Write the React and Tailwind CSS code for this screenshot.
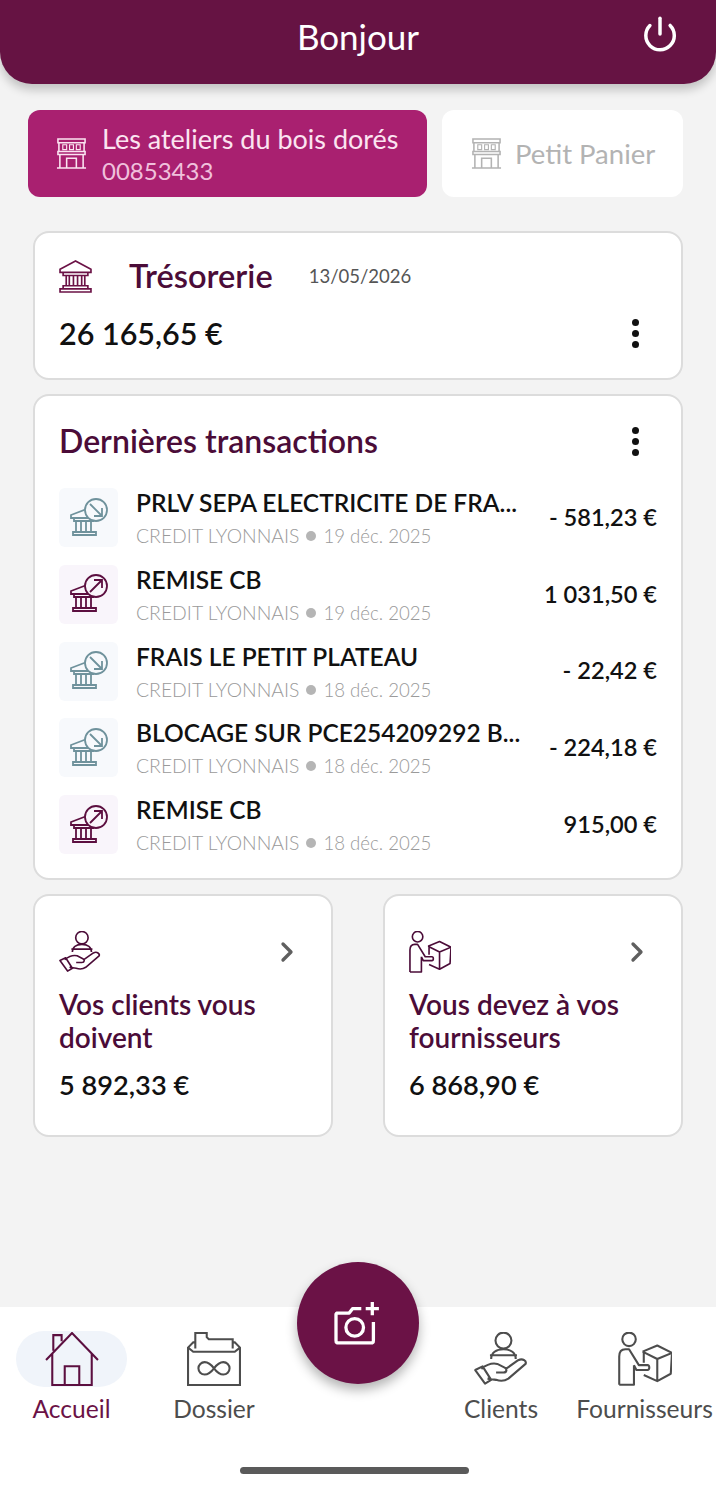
import { Power, ChevronRight } from "lucide-react";

const transactions = [
  { label: "PRLV SEPA ELECTRICITE DE FRA...", date: "19 déc. 2025", amount: "- 581,23 €", out: true },
  { label: "REMISE CB", date: "19 déc. 2025", amount: "1 031,50 €", out: false },
  { label: "FRAIS LE PETIT PLATEAU", date: "18 déc. 2025", amount: "- 22,42 €", out: true },
  { label: "BLOCAGE SUR PCE254209292 B...", date: "18 déc. 2025", amount: "- 224,18 €", out: true },
  { label: "REMISE CB", date: "18 déc. 2025", amount: "915,00 €", out: false },
];

function Dots() {
  return (
    <div className="flex flex-col gap-[4px]">
      <span className="w-[7px] h-[7px] rounded-full bg-[#111111]"></span>
      <span className="w-[7px] h-[7px] rounded-full bg-[#111111]"></span>
      <span className="w-[7px] h-[7px] rounded-full bg-[#111111]"></span>
    </div>
  );
}

function ShopIcon({ className }) {
  return (
    <svg viewBox="0 0 32 32" fill="none" stroke="currentColor" strokeWidth="1.6" className={className}>
      <path d="M2 1h28v4H2zM3 5v9h26V5M2 14h28v3H2zM4 17v14M28 17v14M1 31h30M11 31V21h10v10" />
      <path d="M7 7h4v5H7zM14 7h4v5h-4zM21 7h4v5h-4z" strokeWidth="1.2" />
    </svg>
  );
}

function BankIcon({ className }) {
  return (
    <svg viewBox="0 0 32 32" fill="none" stroke="currentColor" strokeWidth="1.6" className={className}>
      <path d="M16 1 1 9v3h30V9zM4 12h24v3H4zM7 15v10M10 15v10M14 15v10M18 15v10M22 15v10M25 15v10M4 25h24v3H4zM1 28h30v3H1z" />
    </svg>
  );
}

function TxIcon({ out }) {
  const color = out ? "text-[#6f929c]" : "text-[#5c0f40]";
  const bg = out ? "bg-[#f7f9fc]" : "bg-[#f9f5fb]";
  return (
    <div className={`w-[59px] h-[59px] rounded-md shrink-0 flex items-center justify-center ${bg} ${color}`}>
      <svg viewBox="0 0 40 40" fill="none" stroke="currentColor" strokeWidth="1.8" className="w-[40px] h-[40px]">
        <path d="M23 9 2 17v3h25M5 20v3h20M7 23v11M12 23v11M17 23v11M22 23v11M4 34h23v3H4z" />
        <circle cx="27" cy="12" r="11" fill={out ? "#f7f9fc" : "#f9f5fb"} />
        {out ? <path d="M21 6l12 12M33 10v8h-8" /> : <path d="M21 18 33 6M25 6h8v8" />}
      </svg>
    </div>
  );
}

function ClientIcon({ className }) {
  return (
    <svg viewBox="0 0 44 44" fill="none" stroke="currentColor" strokeWidth="1.7" strokeLinejoin="round" className={className}>
      <circle cx="24" cy="7" r="6.5" />
      <path d="M14 22c0-5 4-8 10-8s10 3 10 8M13 19h22" />
      <path d="M1 31l6-3 7 11-5 3zM6 30c5-4 9-5 13-4l6 3c2 1 2 4-1 4h-6M26 30l10-7c4-2 7 1 6 3L28 38c-3 2-7 2-10 1l-7-1" />
    </svg>
  );
}

function SupplierIcon({ className }) {
  return (
    <svg viewBox="0 0 44 44" fill="none" stroke="currentColor" strokeWidth="1.7" strokeLinejoin="round" className={className}>
      <circle cx="9" cy="6" r="5.5" />
      <path d="M1 43V20c0-4 2-6 5-6h3l8 13h7c2 0 2 4 0 4H15l-2-4M13 27v16H1" />
      <path d="M20 16 32 11 44 17 43 34 32 40 21 35M20 16l12 6 12-5M32 22v18M21 16v9" />
    </svg>
  );
}

function NavItem({ label, active, children, className }) {
  return (
    <div className={`flex flex-col items-center ${className}`}>
      <div className={`h-[56px] flex items-center justify-center rounded-full ${active ? "w-[111px] bg-[#f0f4fa] text-[#5c0f40]" : "w-[64px] text-[#4d4d4d]"}`}>
        {children}
      </div>
      <span className={`mt-[7px] text-[24.6px] leading-[30px] whitespace-nowrap ${active ? "text-[#6b1246]" : "text-[#4d4d4d]"}`}>
        {label}
      </span>
    </div>
  );
}

export default function App() {
  return (
    <div className="relative h-[1488px] w-[716px] overflow-hidden bg-[#f3f3f3] flex flex-col font-['Lato',sans-serif]">

      {/* header */}
      <header className="relative h-[84px] shrink-0 rounded-b-[32px] bg-[#661343] shadow-[0_6px_10px_rgba(0,0,0,0.2)] flex items-center justify-center">
        <h1 className="text-[35px] leading-[44px] text-white mb-[12px]">Bonjour</h1>
        <Power className="absolute right-[37px] top-[15px] w-[38px] h-[38px] text-white" strokeWidth={2.2} />
      </header>

      {/* societes */}
      <div className="flex gap-[15px] pl-[28px] pr-[33px] mt-[26px]">
        <div className="w-[399px] h-[87px] rounded-xl bg-[#a92070] flex items-center pl-[28px] gap-[15px] text-[#fbe4f1]">
          <ShopIcon className="w-[31px] h-[33px] shrink-0" />
          <div>
            <p className="text-[27px] leading-[34px] -mt-[1px]">Les ateliers du bois dorés</p>
            <p className="text-[24px] leading-[28px] mt-[1px] text-[#f0c0dc]">00853433</p>
          </div>
        </div>
        <div className="flex-1 h-[87px] rounded-xl bg-white flex items-center pl-[29px] gap-[13px] text-[#b3b3b3]">
          <ShopIcon className="w-[31px] h-[33px] shrink-0" />
          <p className="text-[27.5px]">Petit Panier</p>
        </div>
      </div>

      <main className="px-[33px] mt-[34px] flex flex-col gap-[14px]">

        {/* tresorerie */}
        <section className="h-[149px] rounded-2xl bg-white border-2 border-[#dcdcdc] pl-[24px] pr-[42px] pt-[22px]">
          <div className="flex items-center">
            <BankIcon className="w-[33px] h-[33px] text-[#6b1246]" />
            <h2 className="ml-[37px] text-[32.6px] leading-[42px] font-semibold text-[#4b0c38]">Trésorerie</h2>
            <span className="ml-[36px] text-[18.5px] text-[#555555] mt-[1px]">13/05/2026</span>
          </div>
          <div className="flex items-center justify-between mt-[16px]">
            <p className="text-[30.5px] leading-[40px] font-semibold text-[#111111]">26 165,65 €</p>
            <Dots />
          </div>
        </section>

        {/* transactions */}
        <section className="h-[486px] rounded-2xl bg-white border-2 border-[#dcdcdc] pl-[24px] pr-[24px] pt-[24px]">
          <div className="flex items-center justify-between">
            <h2 className="text-[32px] leading-[42px] font-semibold text-[#4b0c38]">Dernières transactions</h2>
            <div className="mr-[18px]"><Dots /></div>
          </div>
          <div className="mt-[26px] flex flex-col gap-[17.75px]">
            {transactions.map((tx, i) => (
              <div key={i} className="flex items-center h-[59px]">
                <TxIcon out={tx.out} />
                <div className="ml-[18px] flex-1 min-w-0">
                  <p className="text-[24.5px] leading-[32px] mt-[1px] font-semibold text-[#111111] whitespace-nowrap">{tx.label}</p>
                  <p className="text-[19.4px] leading-[26px] mt-[4px] font-light text-[#9a9a9a] flex items-center whitespace-nowrap">
                    CREDIT LYONNAIS
                    <span className="w-[10px] h-[10px] rounded-full bg-[#b5b5b5] mx-[7px]"></span>
                    <span className="text-[18.6px]">{tx.date}</span>
                  </p>
                </div>
                <p className="text-[23.6px] font-semibold text-[#111111] whitespace-nowrap">{tx.amount}</p>
              </div>
            ))}
          </div>
        </section>

        {/* clients / fournisseurs */}
        <div className="grid grid-cols-2 gap-[50px]">
          <section className="h-[243px] rounded-2xl bg-white border-2 border-[#dcdcdc] pl-[24px] pr-[33px] pt-[34px]">
            <div className="flex items-center justify-between h-[44px]">
              <ClientIcon className="w-[42px] h-[42px] text-[#4b0c38]" />
              <ChevronRight className="w-[32px] h-[32px] text-[#5f5f5f] -mr-[5px]" strokeWidth={2.5} />
            </div>
            <h3 className="mt-[14px] text-[28px] leading-[33px] font-semibold text-[#4b0c38]">Vos clients vous doivent</h3>
            <p className="mt-[14px] text-[27.2px] leading-[34px] font-semibold text-[#111111]">5 892,33 €</p>
          </section>
          <section className="h-[243px] rounded-2xl bg-white border-2 border-[#dcdcdc] pl-[24px] pr-[33px] pt-[34px]">
            <div className="flex items-center justify-between h-[44px]">
              <SupplierIcon className="w-[42px] h-[42px] text-[#4b0c38]" />
              <ChevronRight className="w-[32px] h-[32px] text-[#5f5f5f] -mr-[5px]" strokeWidth={2.5} />
            </div>
            <h3 className="mt-[14px] text-[28px] leading-[33px] font-semibold text-[#4b0c38]">Vous devez à vos fournisseurs</h3>
            <p className="mt-[14px] text-[27.2px] leading-[34px] font-semibold text-[#111111]">6 868,90 €</p>
          </section>
        </div>

      </main>

      {/* bottom nav */}
      <nav className="relative mt-auto h-[181px] shrink-0 bg-white">
        <div className="flex pt-[24px] relative">
          <NavItem label="Accueil" active className="w-[111px] ml-[16px]">
            <svg viewBox="0 0 52 52" fill="none" stroke="currentColor" strokeWidth="2" className="w-[54px] h-[54px]">
              <path d="M1 27 26 1l25 26M7 21v30h38V21M19 51V33h14v18M8 18V3h8v6" />
            </svg>
          </NavItem>
          <NavItem label="Dossier" className="w-[100px] ml-[37px]">
            <svg viewBox="0 0 52 52" fill="none" stroke="currentColor" strokeWidth="2" className="w-[54px] h-[54px]">
              <path d="M1 15v36h50V15L46 10H44M8 10H6L1 15l5 4h40l5-4M8 16V1h11v4l2 2h23v9" />
              <path d="M26 35c-3-4-6-6-9-6a6 6 0 0 0 0 12c3 0 6-2 9-6s6-6 9-6a6 6 0 0 1 0 12c-3 0-6-2-9-6z" />
            </svg>
          </NavItem>
          <NavItem label="Clients" className="w-[100px] ml-[187px]">
            <ClientIcon className="w-[54px] h-[54px]" />
          </NavItem>
          <NavItem label="Fournisseurs" className="w-[137px] ml-[25px]">
            <SupplierIcon className="w-[54px] h-[54px]" />
          </NavItem>
        </div>
        <div className="absolute left-[240px] bottom-[14px] w-[229px] h-[7px] rounded-full bg-[#5a5a5a]"></div>
      </nav>

      {/* bouton photo */}
      <button className="absolute left-[297px] top-[1262px] w-[122px] h-[122px] rounded-full bg-[#6b1246] shadow-[0_6px_12px_rgba(0,0,0,0.3)] flex items-center justify-center text-white">
        <svg viewBox="0 0 44 40" fill="none" stroke="currentColor" strokeWidth="3" strokeLinejoin="round" className="w-[50px] h-[44px]">
          <path d="M25 7H17l-3 4H3a2 2 0 0 0-1 1v24a2 2 0 0 0 1 2h32a2 2 0 0 0 1-2V19" />
          <circle cx="19" cy="24" r="8" />
          <path d="M35 1v12M29 7h12" />
        </svg>
      </button>

    </div>
  );
}
